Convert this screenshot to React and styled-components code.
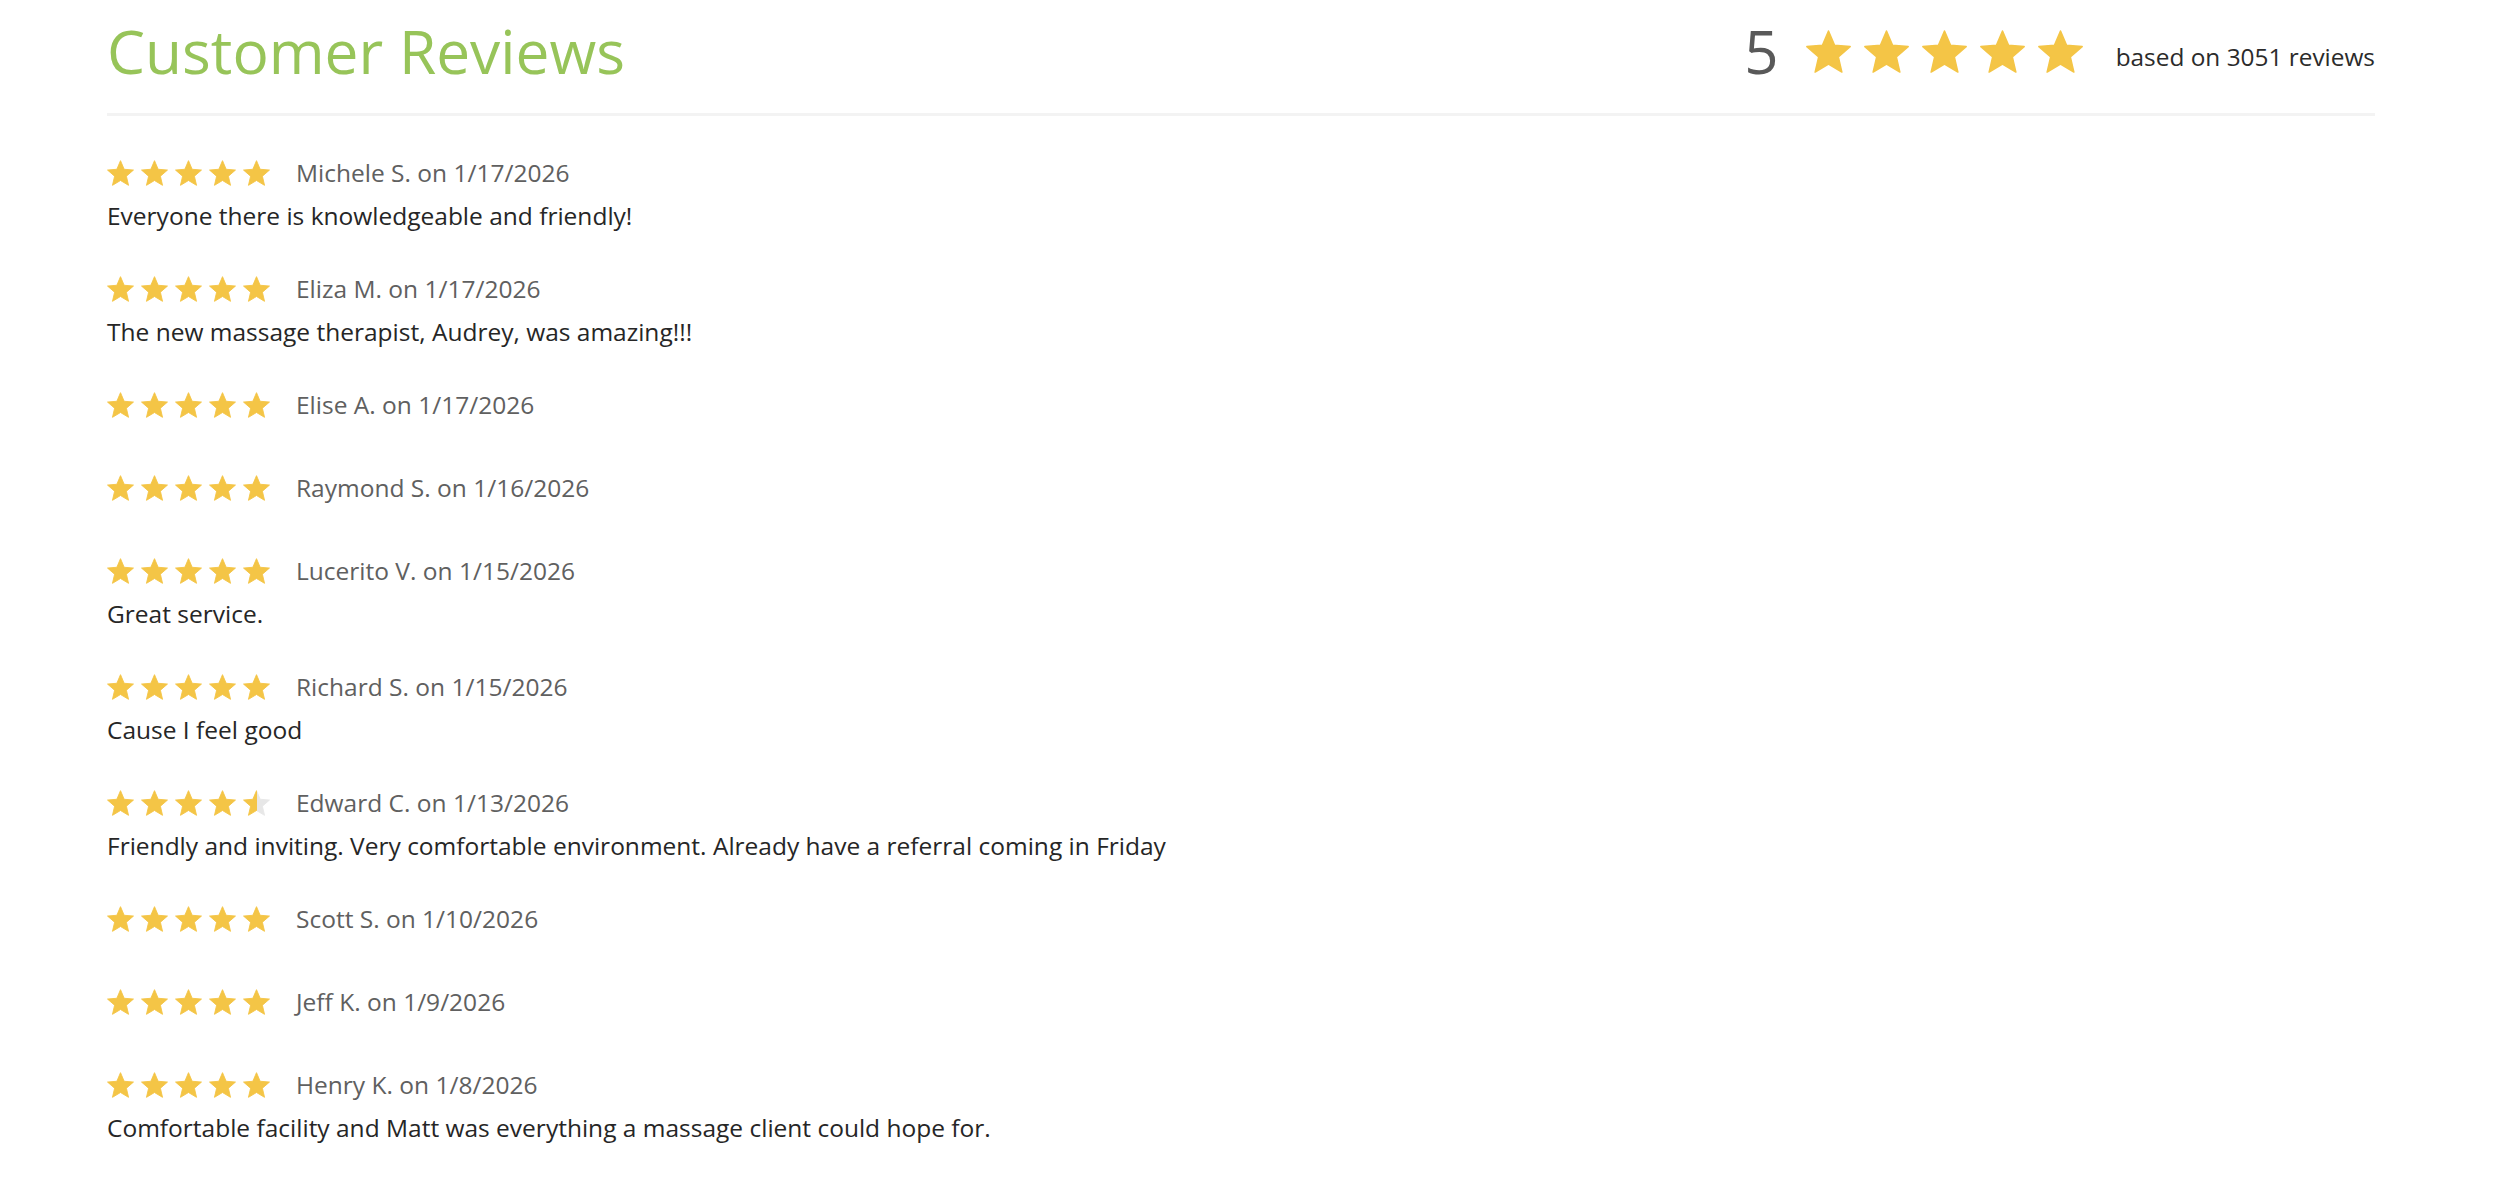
import React, { useId } from "react";
import styled, { createGlobalStyle } from "styled-components";

const GlobalStyle = createGlobalStyle`
  html, body {
    margin: 0;
    padding: 0;
    background: #ffffff;
  }
  body {
    font-family: "Open Sans", "Liberation Sans", Arial, sans-serif;
    color: #222222;
  }
`;

const STAR_PATH =
  "M12 17.27L18.18 21l-1.64-7.03L22 9.24l-7.19-.61L12 2 9.19 8.63 2 9.24l5.46 4.73L5.82 21z";

const GOLD = "#f4c546";
const EMPTY = "#e7e7e7";

const StarSvg = styled.svg`
  display: block;
  width: ${(p) => p.$w}px;
  height: ${(p) => p.$h}px;
  flex: none;
`;

function Star({ fill = 1, w, h }) {
  const id = useId().replace(/:/g, "");
  let paint = GOLD;
  if (fill <= 0) paint = EMPTY;
  else if (fill < 1) paint = `url(#g${id})`;
  return (
    <StarSvg $w={w} $h={h} viewBox="1.6 1.6 20.8 19.8" aria-hidden="true">
      {fill > 0 && fill < 1 && (
        <defs>
          <linearGradient id={`g${id}`} x1="0" x2="1" y1="0" y2="0">
            <stop offset={fill} stopColor={GOLD} />
            <stop offset={fill} stopColor={EMPTY} />
          </linearGradient>
        </defs>
      )}
      <path
        d={STAR_PATH}
        fill={paint}
        stroke={paint}
        strokeWidth="0.7"
        strokeLinejoin="round"
      />
    </StarSvg>
  );
}

const StarRow = styled.div`
  display: flex;
  align-items: center;
  gap: ${(p) => p.$gap}px;
`;

function Stars({ rating, w, h, gap }) {
  return (
    <StarRow $gap={gap} aria-label={`${rating} stars`}>
      {[0, 1, 2, 3, 4].map((i) => (
        <Star key={i} fill={Math.max(0, Math.min(1, rating - i))} w={w} h={h} />
      ))}
    </StarRow>
  );
}

const Page = styled.div`
  padding: 0 125px 0 107px;
`;

const Header = styled.header`
  display: flex;
  justify-content: space-between;
  align-items: center;
  padding: 18px 0 29px;
  border-bottom: 3px solid #f3f3f3;
`;

const Title = styled.h2`
  margin: 0;
  font-size: 60.4px;
  line-height: 66px;
  font-weight: 400;
  color: #97c459;
`;

const Summary = styled.div`
  display: flex;
  align-items: center;
  height: 66px;
`;

const Score = styled.span`
  font-size: 60px;
  line-height: 66px;
  color: #595959;
  margin-right: 27px;
`;

const BasedOn = styled.span`
  font-size: 24.4px;
  line-height: 32px;
  color: #2b2b2b;
  margin-left: 33px;
  margin-top: 12px;
`;

const List = styled.div`
  padding-top: 31px;
`;

const Review = styled.article`
  margin-bottom: 31px;
`;

const Meta = styled.div`
  display: flex;
  align-items: center;
  height: 36px;
  padding: 8px 0;
`;

const Author = styled.span`
  font-size: 24.5px;
  line-height: 36px;
  color: #606060;
  margin-left: 26px;
`;

const Comment = styled.p`
  margin: 0;
  font-size: 24.5px;
  line-height: 33px;
  color: #262626;
`;

const reviews = [
  { name: "Michele S.", date: "1/17/2026", rating: 5, text: "Everyone there is knowledgeable and friendly!" },
  { name: "Eliza M.", date: "1/17/2026", rating: 5, text: "The new massage therapist, Audrey, was amazing!!!" },
  { name: "Elise A.", date: "1/17/2026", rating: 5 },
  { name: "Raymond S.", date: "1/16/2026", rating: 5 },
  { name: "Lucerito V.", date: "1/15/2026", rating: 5, text: "Great service." },
  { name: "Richard S.", date: "1/15/2026", rating: 5, text: "Cause I feel good" },
  {
    name: "Edward C.",
    date: "1/13/2026",
    rating: 4.5,
    text: "Friendly and inviting. Very comfortable environment. Already have a referral coming in Friday",
  },
  { name: "Scott S.", date: "1/10/2026", rating: 5 },
  { name: "Jeff K.", date: "1/9/2026", rating: 5 },
  {
    name: "Henry K.",
    date: "1/8/2026",
    rating: 5,
    text: "Comfortable facility and Matt was everything a massage client could hope for.",
  },
];

export default function App() {
  return (
    <>
      <GlobalStyle />
      <Page>
        <Header>
          <Title>Customer Reviews</Title>
          <Summary>
            <Score>5</Score>
            <Stars rating={5} w={45} h={43} gap={13} />
            <BasedOn>based on 3051 reviews</BasedOn>
          </Summary>
        </Header>
        <List>
          {reviews.map((r, i) => (
            <Review key={i}>
              <Meta>
                <Stars rating={r.rating} w={27} h={26} gap={7} />
                <Author>
                  {r.name} on {r.date}
                </Author>
              </Meta>
              {r.text && <Comment>{r.text}</Comment>}
            </Review>
          ))}
        </List>
      </Page>
    </>
  );
}
